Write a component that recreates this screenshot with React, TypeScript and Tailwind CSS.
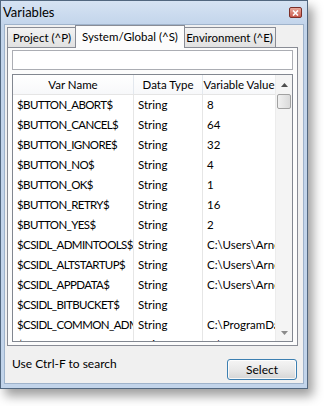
const font = { fontFamily: '"Segoe UI", Lato, "Noto Sans", sans-serif' };

const rows: [string, string, string][] = [
  ["$BUTTON_ABORT$", "String", "8"],
  ["$BUTTON_CANCEL$", "String", "64"],
  ["$BUTTON_IGNORE$", "String", "32"],
  ["$BUTTON_NO$", "String", "4"],
  ["$BUTTON_OK$", "String", "1"],
  ["$BUTTON_RETRY$", "String", "16"],
  ["$BUTTON_YES$", "String", "2"],
  ["$CSIDL_ADMINTOOLS$", "String", "C:\\Users\\Arnor\\AppData\\Roaming\\Microsoft\\Windows\\Start Menu\\Programs\\Administrative Tools"],
  ["$CSIDL_ALTSTARTUP$", "String", "C:\\Users\\Arnor\\AppData\\Roaming\\Microsoft\\Windows\\Start Menu\\Programs\\Startup"],
  ["$CSIDL_APPDATA$", "String", "C:\\Users\\Arnor\\AppData\\Roaming"],
  ["$CSIDL_BITBUCKET$", "String", ""],
  ["$CSIDL_COMMON_ADMINTOOLS$", "String", "C:\\ProgramData\\Microsoft\\Windows\\Start Menu\\Programs\\Administrative Tools"],
  ["$CSIDL_COMMON_ALTSTARTUP$", "String", "C:\\ProgramData\\Microsoft\\Windows\\Start Menu\\Programs\\Startup"],
];

function Tab({ label, width, active }: { label: string; width: string; active?: boolean }) {
  if (active) {
    return (
      <div className={`relative z-10 -mx-[2px] flex h-[23px] items-center justify-center whitespace-nowrap border border-b-0 border-[#898c95] bg-[#fcfcfc] text-[11.5px] text-black ${width}`}>
        {label}
      </div>
    );
  }
  return (
    <div className={`mt-[2px] flex h-[21px] items-center justify-center whitespace-nowrap border border-b-0 border-[#898c95] bg-gradient-to-b from-[#f3f3f3] to-[#e0e0e0] text-[11.5px] text-black ${width}`}>
      {label}
    </div>
  );
}

function ScrollBar() {
  return (
    <div className="flex w-[17px] flex-col border-l border-[#ececec] bg-[#f4f4f4]">
      <div className="flex h-[19px] items-center justify-center">
        <svg width="7" height="4" viewBox="0 0 7 4">
          <path d="M0 4 L3.5 0 L7 4 Z" fill="#4d4d4d" />
        </svg>
      </div>
      <div className="mx-[1px] h-[15px] rounded-[2px] border border-[#a1a1a1] bg-gradient-to-r from-[#f1f1f1] to-[#dadada]" />
      <div className="flex-1" />
      <div className="flex h-[17px] items-center justify-center">
        <svg width="7" height="4" viewBox="0 0 7 4">
          <path d="M0 0 L7 0 L3.5 4 Z" fill="#8a8a8a" />
        </svg>
      </div>
    </div>
  );
}

function ListView() {
  return (
    <div className="mt-[4px] flex h-[268px] overflow-hidden border border-[#828790] bg-white text-[11.5px] text-black">
      <div className="flex-1 overflow-hidden">
        <div className="grid h-[20px] grid-cols-[121px_69px_1fr] whitespace-nowrap border-b border-[#e5e5e5] bg-gradient-to-b from-white to-[#f7f8fa]">
          <div className="flex items-center justify-center border-r border-[#e3e8ee]">Var Name</div>
          <div className="flex items-center justify-center border-r border-[#e3e8ee]">Data Type</div>
          <div className="flex items-center justify-center">Variable Value</div>
        </div>
        {rows.map(([n, t, v]) => (
          <div key={n} className="grid h-[20px] grid-cols-[121px_69px_1fr] whitespace-nowrap leading-[20px]">
            <div className="overflow-hidden border-r border-[#e6e6e6] pl-[4px] tracking-[-0.6px]">{n}</div>
            <div className="overflow-hidden border-r border-[#e6e6e6] pl-[4px]">{t}</div>
            <div className="overflow-hidden pl-[4px]">{v}</div>
          </div>
        ))}
      </div>
      <ScrollBar />
    </div>
  );
}

export default function App() {
  return (
    <div className="min-h-screen bg-white" style={font}>
      <div className="flex h-[389px] w-[308px] flex-col border border-[#52677f] bg-[#c2d4ea] shadow-[5px_7px_10px_rgba(0,0,0,0.38)]">
        <div className="flex h-[23px] items-center justify-between bg-gradient-to-b from-[#d6e3f3] to-[#c3d5eb] pl-[2px] pr-[5px]">
          <span className="text-[13px] text-black">Variables</span>
          <div className="flex h-[11px] w-[13px] items-center justify-center rounded-[2px] border border-[#7c2f28] bg-gradient-to-b from-[#e9a99c] to-[#c8574a]">
            <svg width="7" height="6" viewBox="0 0 7 6">
              <path d="M1 0.5 L6 5.5 M6 0.5 L1 5.5" stroke="white" strokeWidth="1.6" />
            </svg>
          </div>
        </div>
        <div className="mx-[3px] mb-[4px] flex flex-1 flex-col border border-[#9fb3cb] bg-[#f0f0f0]">
          <div className="-mb-px flex pl-[2px]">
            <Tab label="Project  (^P)" width="w-[70px]" />
            <Tab label="System/Global (^S)" width="w-[110px]" active />
            <Tab label="Environment (^E)" width="w-[93px]" />
          </div>
          <div className="ml-[2px] mr-[5px] flex h-[299px] flex-col border border-[#898c95] bg-[#fcfcfc] px-[4px] pt-[2px]">
            <div className="h-[20px] border border-[#abadb3] bg-white" />
            <ListView />
          </div>
          <div className="flex flex-1 items-start justify-between pl-[7px] pr-[6px]">
            <span className="mt-[10px] text-[12px] leading-[16px] text-black">Use Ctrl-F to search</span>
            <button className="mt-[13px] h-[21px] w-[70px] rounded-[3px] border border-[#3c7fb1] bg-gradient-to-b from-[#f5f5f5] via-[#e9e9e9] to-[#d5d5d5] text-[12px] text-black shadow-[inset_0_0_0_1px_rgba(255,255,255,0.8)]">
              Select
            </button>
          </div>
        </div>
      </div>
    </div>
  );
}
